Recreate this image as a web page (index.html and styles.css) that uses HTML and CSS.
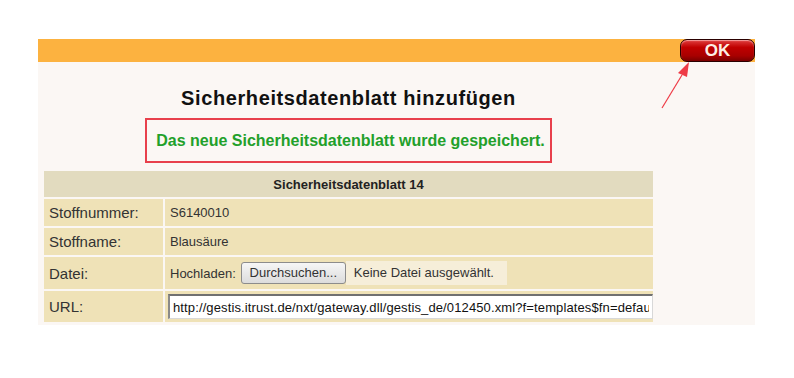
FILE: index.html
```html
<!DOCTYPE html>
<html lang="de">
<head>
    <meta charset="UTF-8">
    <title>Sicherheitsdatenblatt hinzufügen</title>
    <link rel="stylesheet" href="styles.css">
</head>
<body>
    <div class="page">
        <!-- Top bar with OK button -->
        <div class="topbar">
            <button class="ok-btn">OK</button>
        </div>

        <!-- Hint arrow pointing at the OK button -->
        <svg class="hint-arrow" width="40" height="60" viewBox="0 0 40 60">
            <line x1="4" y1="50" x2="24" y2="17" stroke="#ee3b46" stroke-width="1.2"/>
            <polygon points="31,4 20,15 29,19" fill="#ee3b46"/>
        </svg>

        <div class="panel">
            <div class="content">
                <h1>Sicherheitsdatenblatt hinzufügen</h1>
                <div class="notice">Das neue Sicherheitsdatenblatt wurde gespeichert.</div>

                <table class="sdb">
                    <tr>
                        <th colspan="2">Sicherheitsdatenblatt 14</th>
                    </tr>
                    <tr class="r1">
                        <td class="label">Stoffnummer:</td>
                        <td class="value">S6140010</td>
                    </tr>
                    <tr class="r2">
                        <td class="label">Stoffname:</td>
                        <td class="value">Blausäure</td>
                    </tr>
                    <tr class="r3">
                        <td class="label">Datei:</td>
                        <td class="value">
                            <div class="upload">
                                <span>Hochladen:</span>
                                <span class="file-btn">Durchsuchen...</span>
                                <span class="file-name">Keine Datei ausgewählt.</span>
                            </div>
                        </td>
                    </tr>
                    <tr class="r4">
                        <td class="label">URL:</td>
                        <td class="value url-cell">
                            <input class="url" type="text" value="http://gestis.itrust.de/nxt/gateway.dll/gestis_de/012450.xml?f=templates$fn=default.htm$3.0">
                        </td>
                    </tr>
                </table>
            </div>
        </div>
    </div>
</body>
</html>
```

FILE: styles.css
```css
/* Basic Styling */
body {
    margin: 0;
    background-color: #fff;
    font-family: "Liberation Sans", Arial, sans-serif;
    color: #222;
}

.page {
    position: relative;
    width: 717px;
    margin-left: 38px;
    padding-top: 39px;
}

/* Top bar */
.topbar {
    height: 23px;
    background-color: #fcb240;
    display: flex;
    justify-content: flex-end;
}

.ok-btn {
    width: 75px;
    height: 23px;
    margin: 0;
    padding: 0;
    border: 1px solid #2a0000;
    border-radius: 7px;
    background: linear-gradient(#e04040 0%, #c00000 35%, #a80000 75%, #7a0000 100%);
    box-shadow: inset 0 1px 1px rgba(255, 200, 200, 0.7);
    color: #fdeee4;
    font-family: "Liberation Sans", Arial, sans-serif;
    font-weight: bold;
    font-size: 17px;
    line-height: 19px;
    cursor: pointer;
}

.hint-arrow {
    position: absolute;
    left: 620px;
    top: 58px;
}

/* Panel */
.panel {
    background-color: #fbf7f4;
    padding: 0 0 1px 4px;
}

.content {
    width: 613px;
    text-align: center;
}

h1 {
    margin: 0;
    padding-top: 25px;
    font-size: 20px;
    letter-spacing: 0.6px;
    line-height: 22px;
    color: #111;
}

.notice {
    width: fit-content;
    margin: 9px auto 0 auto;
    padding: 11px 5px 11px 9px;
    border: 2px solid #e8404c;
    color: #22a02a;
    font-weight: bold;
    font-size: 16px;
    line-height: 19px;
}

/* Table */
.sdb {
    margin-top: 6px;
    width: 613px;
    border-spacing: 2px;
    text-align: left;
}

.sdb th {
    height: 26px;
    padding: 0;
    background-color: #e2dbbf;
    font-size: 13px;
    text-align: center;
    color: #222;
}

.sdb td {
    padding: 0;
    background-color: #efe2b7;
    color: #333;
}

.r1 td, .r2 td { height: 27px; }
.r3 td { height: 32px; }
.r4 td { height: 31px; }

.label {
    width: 114px;
    padding-left: 5px !important;
    font-size: 15px;
    color: #3a3a3a;
}

.value {
    padding-left: 5px !important;
    font-size: 13px;
    color: #222;
}

/* File upload */
.upload {
    display: flex;
    align-items: center;
}

.file-btn {
    margin-left: 5px;
    width: 103px;
    height: 20px;
    line-height: 20px;
    text-align: center;
    border: 1px solid #8c8c8c;
    border-radius: 3px;
    background: linear-gradient(#f6f6f6, #dcdcdc);
}

.file-name {
    height: 24px;
    line-height: 24px;
    padding: 0 7px 0 8px;
    background-color: #f6eed9;
    width: 146px;
}

/* URL input */
.url-cell {
    padding-left: 3px !important;
}

.url {
    width: 476px;
    height: 22px;
    margin: 0;
    padding: 0 3px;
    border-style: solid;
    border-width: 2px 1px 1px 2px;
    border-color: #707070 #d8d8d8 #d8d8d8 #8a8a8a;
    background-color: #fff;
    font-family: "Liberation Sans", Arial, sans-serif;
    font-size: 13px;
    letter-spacing: 0.12px;
    color: #111;
}
```
